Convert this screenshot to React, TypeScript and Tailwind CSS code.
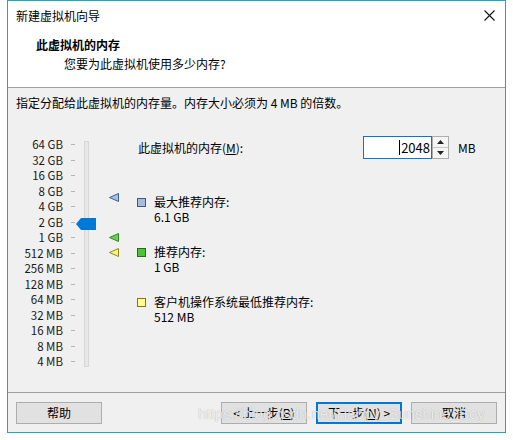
import React from 'react'

const labels = [
  '64 GB', '32 GB', '16 GB', '8 GB', '4 GB', '2 GB', '1 GB',
  '512 MB', '256 MB', '128 MB', '64 MB', '32 MB', '16 MB', '8 MB', '4 MB',
]

function Marker({ fill, stroke, top }: { fill: string; stroke: string; top: string }) {
  return (
    <svg className={`absolute left-0 ${top}`} width="10" height="9" viewBox="0 0 10 9">
      <polygon points="0.5,4.5 9.5,0.5 9.5,8.5" fill={fill} stroke={stroke} strokeWidth="1" />
    </svg>
  )
}

function Legend({ box, title, value }: { box: string; title: string; value: string }) {
  return (
    <div className="flex gap-[8px]">
      <div className={`mt-[4px] h-[9px] w-[9px] border ${box}`} />
      <div className="flex flex-col leading-[15px]">
        <div>{title}</div>
        <div>{value}</div>
      </div>
    </div>
  )
}

function WinButton({ children, primary }: { children: React.ReactNode; primary?: boolean }) {
  return (
    <button
      className={`flex h-[22px] w-[86px] items-center justify-center bg-[#e1e1e1] leading-none ${
        primary ? 'border-2 border-[#0078d7]' : 'border border-[#adadad]'
      }`}
    >
      {children}
    </button>
  )
}

export default function App() {
  return (
    <div className="relative h-[440px] w-[513px] bg-white font-['Noto_Sans_CJK_SC',sans-serif] text-[12px] text-black">
      <div className="ml-[7px] flex h-[433px] w-[499px] flex-col border border-[#1aa9bf]">
        {/* title bar */}
        <div className="flex h-[29px] items-center justify-between bg-white pl-[8px] pr-[10px]">
          <span className="leading-none">新建虚拟机向导</span>
          <svg width="11" height="11" viewBox="0 0 11 11">
            <path d="M0.5 0.5L10.5 10.5M10.5 0.5L0.5 10.5" stroke="#111" strokeWidth="1.1" />
          </svg>
        </div>

        {/* header */}
        <div className="flex h-[58px] flex-col border-b border-[#a0a0a0] bg-white pt-[7px]">
          <div className="pl-[28px] font-bold leading-[16px]">此虚拟机的内存</div>
          <div className="mt-[3px] pl-[56px] leading-[16px]">您要为此虚拟机使用多少内存?</div>
        </div>

        {/* body */}
        <div className="flex flex-1 flex-col bg-[#f0f0f0] pt-[7px]">
          <div className="pl-[8px] leading-[16px]">指定分配给此虚拟机的内存量。内存大小必须为 4 MB 的倍数。</div>

          <div className="mt-[25px] flex items-start">
            {/* labels */}
            <div className="mt-[1px] flex w-[55px] flex-col">
              {labels.map((l) => (
                <div key={l} className="flex h-[15.5px] items-center justify-end text-[11.5px] leading-none text-[#1a1a1a]">
                  {l}
                </div>
              ))}
            </div>
            {/* ticks */}
            <div className="ml-[8px] mt-[1px] flex w-[4px] flex-col">
              {labels.map((l) => (
                <div key={l} className="flex h-[15.5px] items-center">
                  <div className="h-px w-[4px] bg-[#b4b4b4]" />
                </div>
              ))}
            </div>
            {/* track */}
            <div className="relative ml-[9px] mt-[5px] h-[226px] w-[5px] border border-[#d6d6d6] bg-[#e7e7e7]">
              <svg className="absolute left-[-9px] top-[76px]" width="20" height="12" viewBox="0 0 20 12">
                <polygon points="0,6 5,0 20,0 20,12 5,12" fill="#0078d7" />
              </svg>
            </div>
            {/* markers */}
            <div className="relative ml-[20px] h-[240px] w-[10px]">
              <Marker fill="#a9bfe0" stroke="#3f5f91" top="top-[57px]" />
              <Marker fill="#6fcf55" stroke="#2c8a1e" top="top-[97px]" />
              <Marker fill="#f6f27c" stroke="#8f8a16" top="top-[112px]" />
            </div>
            {/* right content */}
            <div className="ml-[18px] flex flex-col">
              <div className="flex h-[23px] items-center">
                <span className="w-[226px] pl-px leading-none">
                  此虚拟机的内存(<span className="underline">M</span>):
                </span>
                <div className="flex h-[23px] w-[69px] items-center justify-end border border-[#0078d7] bg-white pr-[1px] text-[13px] leading-none">
                  <span className="mr-[1px] h-[15px] w-px bg-black" />
                  2048
                </div>
                <div className="flex h-[23px] w-[17px] flex-col border border-[#adadad] bg-[#f5f5f5]">
                  <div className="flex flex-1 items-center justify-center border-b border-[#c8c8c8]">
                    <svg width="7" height="4" viewBox="0 0 7 4">
                      <polygon points="0,4 3.5,0 7,4" fill="#222" />
                    </svg>
                  </div>
                  <div className="flex flex-1 items-center justify-center">
                    <svg width="7" height="4" viewBox="0 0 7 4">
                      <polygon points="0,0 3.5,4 7,0" fill="#222" />
                    </svg>
                  </div>
                </div>
                <span className="ml-[9px] leading-none">MB</span>
              </div>
              <div className="mt-[35px] flex flex-col gap-[20px]">
                <Legend box="border-[#3c5a86] bg-[#a7bcdc]" title="最大推荐内存:" value="6.1 GB" />
                <Legend box="border-[#2a6a1c] bg-[#4cc33a]" title="推荐内存:" value="1 GB" />
                <Legend box="border-[#7a7a10] bg-[#ffff90]" title="客户机操作系统最低推荐内存:" value="512 MB" />
              </div>
            </div>
          </div>
        </div>

        {/* footer */}
        <div className="flex border-t border-[#a0a0a0] bg-[#f0f0f0] pb-[8px] pl-[8px] pr-[8px] pt-[9px]">
          <WinButton>帮助</WinButton>
          <div className="flex-1" />
          <div className="flex gap-[9px]">
            <WinButton>
              &lt; 上一步(<span className="underline">B</span>)
            </WinButton>
            <WinButton primary>
              下一步(<span className="underline">N</span>) &gt;
            </WinButton>
            <WinButton>取消</WinButton>
          </div>
        </div>
      </div>

      {/* watermark */}
      <div className="pointer-events-none absolute left-[198px] top-[405px] font-['Liberation_Sans',sans-serif] text-[15px] leading-[18px] text-white/80 [text-shadow:0_0_1px_rgba(0,0,0,0.35)]">
        https://blog.csdn.net/Happy_Sunshine_Boy
      </div>
    </div>
  )
}
